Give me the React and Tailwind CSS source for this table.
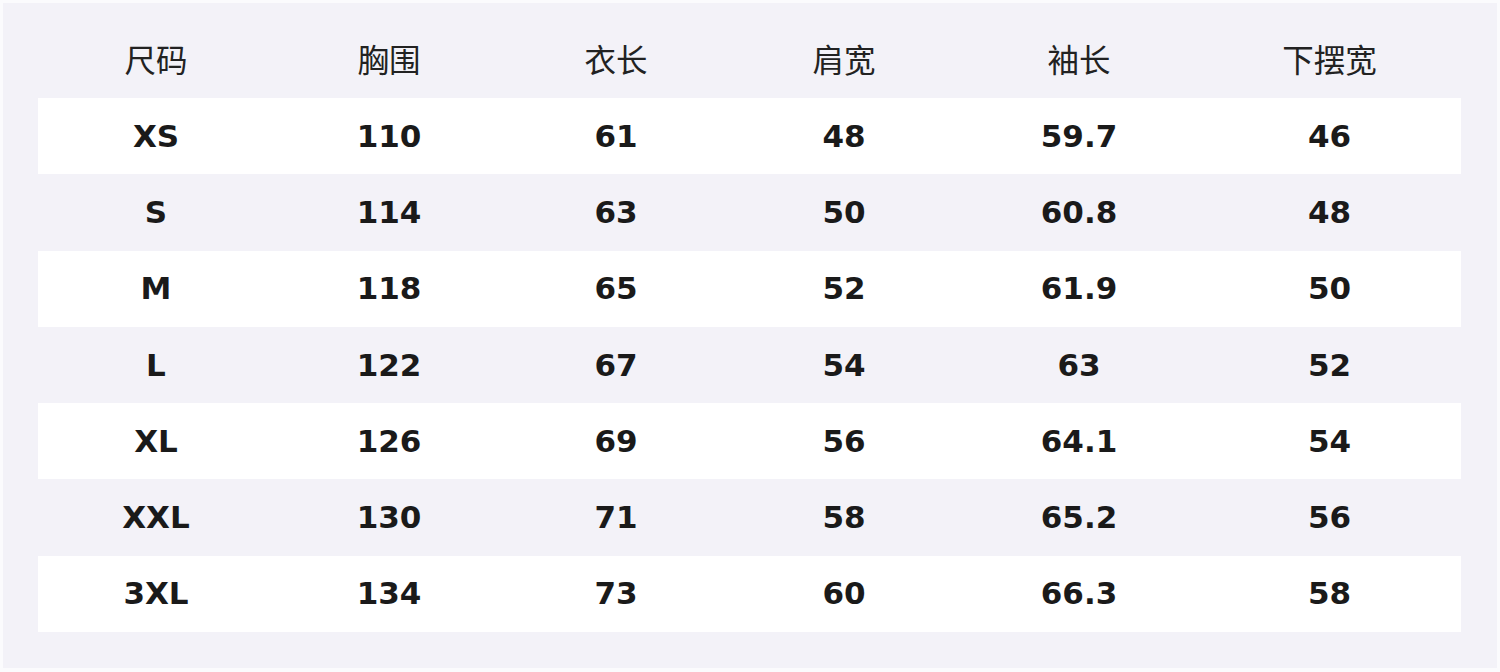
export default function App() {
  const headers = ["尺码", "胸围", "衣长", "肩宽", "袖长", "下摆宽"];
  const rows = [
    ["XS", "110", "61", "48", "59.7", "46"],
    ["S", "114", "63", "50", "60.8", "48"],
    ["M", "118", "65", "52", "61.9", "50"],
    ["L", "122", "67", "54", "63", "52"],
    ["XL", "126", "69", "56", "64.1", "54"],
    ["XXL", "130", "71", "58", "65.2", "56"],
    ["3XL", "134", "73", "60", "66.3", "58"],
  ];
  const cols = "grid w-[1423px] grid-cols-[236px_230px_224px_232px_238px_263px]";
  return (
    <div className="w-[1500px] h-[672px] bg-[#fbfbfd] pt-[3px] pl-[3px]">
      <div className="w-[1494px] h-[665px] bg-[#f3f2f8] pl-[35px] flex flex-col">
        <div className={`${cols} h-[95px] items-center pt-[16px]`}>
          {headers.map((h) => (
            <div
              key={h}
              className="text-center text-[31.5px] text-[#222] font-['Noto_Sans_CJK_SC',sans-serif] leading-none"
            >
              {h}
            </div>
          ))}
        </div>
        {rows.map((r, i) => (
          <div
            key={r[0]}
            className={`${cols} h-[76.3px] items-center ${i % 2 === 0 ? "bg-white" : ""}`}
          >
            {r.map((c, j) => (
              <div
                key={j}
                className="text-center text-[31px] font-bold text-[#1a1a1a] font-['DejaVu_Sans',sans-serif] leading-none"
              >
                {c}
              </div>
            ))}
          </div>
        ))}
      </div>
    </div>
  );
}
